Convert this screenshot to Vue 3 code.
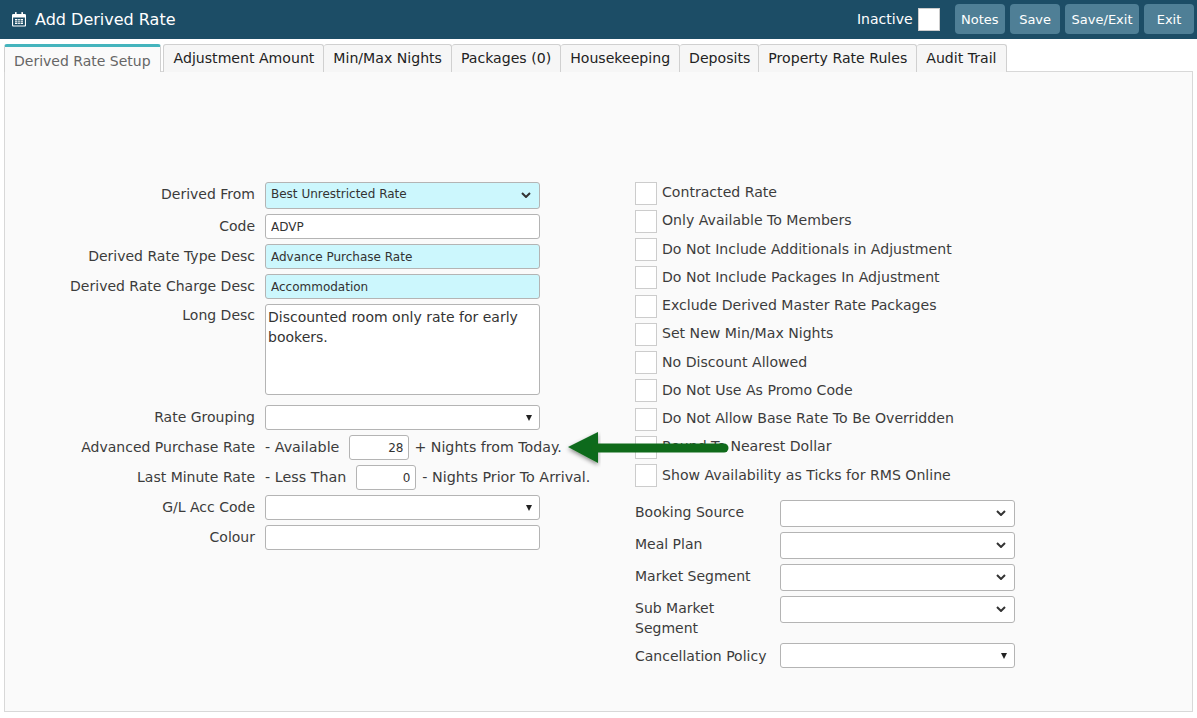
<template>
  <div class="page">
    <header class="topbar">
      <svg class="cal" viewBox="0 0 14 16" width="14" height="16">
        <path d="M1.5 3.5h11a1 1 0 0 1 1 1v9.5a1 1 0 0 1-1 1h-11a1 1 0 0 1-1-1V4.500a1 1 0 0 1 1-1z" fill="none" stroke="#fff" stroke-width="1.200" />
        <path d="M1 3.500h12v3H1z" fill="#fff" />
        <rect x="3" y="1" width="1.600" height="3" rx=".6" fill="#fff" />
        <rect x="9.400" y="1" width="1.600" height="3" rx=".6" fill="#fff" />
        <path d="M3 8h8v5H3z" fill="#fff" />
        <path d="M5.700 8v5M8.300 8v5M3 9.700h8M3 11.300h8" stroke="#1c4d66" stroke-width=".7" />
      </svg>
      <h1>Add Derived Rate</h1>
      <div class="actions">
        <label class="inactive">Inactive <input type="checkbox" class="check" /></label>
        <button v-for="b in buttons" :key="b">{{ b }}</button>
      </div>
    </header>

    <nav class="tabs">
      <div v-for="(t, i) in tabs" :key="t" class="tab" :class="{ active: i === 0 }">{{ t }}</div>
    </nav>

    <main class="panel">
      <section class="left">
        <div class="row tall">
          <label>Derived From</label>
          <div class="select req">
            <span class="sel-text">Best Unrestricted Rate</span>
            <svg class="chev" viewBox="0 0 10 6" width="10" height="6"><path d="M1 1l4 4 4-4" fill="none" stroke="#333" stroke-width="2" /></svg>
          </div>
        </div>
        <div class="row">
          <label>Code</label>
          <input class="field" value="ADVP" />
        </div>
        <div class="row">
          <label>Derived Rate Type Desc</label>
          <input class="field req" value="Advance Purchase Rate" />
        </div>
        <div class="row">
          <label>Derived Rate Charge Desc</label>
          <input class="field req" value="Accommodation" />
        </div>
        <div class="row area">
          <label>Long Desc</label>
          <textarea class="field">Discounted room only rate for early bookers.</textarea>
        </div>
        <div class="row">
          <label>Rate Grouping</label>
          <div class="select"><span></span><i class="tri"></i></div>
        </div>
        <div class="row">
          <label>Advanced Purchase Rate</label>
          <div class="inline">
            <span>- Available</span>
            <input class="field num" value="28" />
            <span class="plus">+ Nights from Today.</span>
          </div>
        </div>
        <div class="row">
          <label>Last Minute Rate</label>
          <div class="inline">
            <span>- Less Than</span>
            <input class="field num" value="0" />
            <span>- Nights Prior To Arrival.</span>
          </div>
        </div>
        <div class="row">
          <label>G/L Acc Code</label>
          <div class="select"><span></span><i class="tri"></i></div>
        </div>
        <div class="row">
          <label>Colour</label>
          <input class="field" />
        </div>
      </section>

      <section class="right">
        <div class="checks">
          <label v-for="c in checks" :key="c" class="check-row">
            <input type="checkbox" class="check" />
            <span>{{ c }}</span>
          </label>
        </div>
        <div class="combos">
          <div v-for="s in combos" :key="s.label" class="combo">
            <label>{{ s.label }}</label>
            <div class="select" :class="{ short: s.tri }">
              <span></span>
              <i v-if="s.tri" class="tri"></i>
              <svg v-else class="chev" viewBox="0 0 10 6" width="10" height="6"><path d="M1 1l4 4 4-4" fill="none" stroke="#333" stroke-width="2" /></svg>
            </div>
          </div>
        </div>
      </section>

      <svg class="arrow" viewBox="0 0 176 40" width="176" height="40">
        <defs>
          <filter id="sh" x="-10%" y="-30%" width="120%" height="170%">
            <feDropShadow dx="0" dy="2" stdDeviation="2" flood-color="#000" flood-opacity=".45" />
          </filter>
        </defs>
        <path d="M164 18H36" stroke="#0f6a1a" stroke-width="9" stroke-linecap="round" fill="none" filter="url(#sh)" />
        <path d="M8 17L38 2v31z" fill="#0f6a1a" filter="url(#sh)" />
        <path d="M164 18H36" stroke="#0f6a1a" stroke-width="9" stroke-linecap="round" fill="none" />
      </svg>
    </main>
  </div>
</template>

<script setup>
const buttons = ["Notes", "Save", "Save/Exit", "Exit"];
const tabs = [
  "Derived Rate Setup",
  "Adjustment Amount",
  "Min/Max Nights",
  "Packages (0)",
  "Housekeeping",
  "Deposits",
  "Property Rate Rules",
  "Audit Trail",
];
const checks = [
  "Contracted Rate",
  "Only Available To Members",
  "Do Not Include Additionals in Adjustment",
  "Do Not Include Packages In Adjustment",
  "Exclude Derived Master Rate Packages",
  "Set New Min/Max Nights",
  "No Discount Allowed",
  "Do Not Use As Promo Code",
  "Do Not Allow Base Rate To Be Overridden",
  "Round To Nearest Dollar",
  "Show Availability as Ticks for RMS Online",
];
const combos = [
  { label: "Booking Source" },
  { label: "Meal Plan" },
  { label: "Market Segment" },
  { label: "Sub Market Segment" },
  { label: "Cancellation Policy", tri: true },
];
</script>

<style>
html,
body {
  margin: 0;
  background: #fff;
}
</style>

<style scoped>
.page {
  width: 1197px;
  height: 718px;
  overflow: hidden;
  font-family: "DejaVu Sans", Verdana, sans-serif;
  font-size: 14px;
  color: #3c3c3c;
}
.topbar {
  height: 39px;
  background: #1c4d66;
  display: flex;
  align-items: center;
  padding: 0 3px 1px 12px;
  box-sizing: border-box;
}
.cal {
  margin-right: 9px;
}
h1 {
  margin: 0;
  font-size: 16px;
  font-weight: normal;
  color: #fff;
}
.actions {
  margin-left: auto;
  display: flex;
  align-items: center;
  gap: 5px;
}
.inactive {
  display: flex;
  align-items: center;
  gap: 5px;
  color: #fff;
  margin-right: 10px;
}
button {
  height: 30px;
  padding: 0 6.500px;
  min-width: 50px;
  border: none;
  border-radius: 4px;
  background: #4f7f96;
  color: #fff;
  font: inherit;
  font-size: 13px;
}
.tabs {
  display: flex;
  height: 28px;
  margin-top: 5px;
  padding-left: 4px;
  align-items: flex-start;
  position: relative;
  z-index: 1;
}
.tab {
  height: 27px;
  line-height: 27px;
  padding: 0 9px;
  border: 1px solid #d0d0d0;
  border-bottom: none;
  border-left: none;
  border-radius: 3px 3px 0 0;
  background: #f6f6f6;
  color: #222;
  font-size: 14.100px;
  white-space: nowrap;
}
.tab.active {
  height: 28px;
  line-height: 29px;
  border-left: 1px solid #d0d0d0;
  border-top: 3px solid #44b4bd;
  box-sizing: border-box;
  background: #fafafa;
  color: #666;
  font-size: 14px;
  margin-right: 2px;
}
.tab.active + .tab {
  border-left: 1px solid #d0d0d0;
  padding-left: 10px;
}
.tab:nth-child(6) {
  padding-right: 8px;
}
.panel {
  position: relative;
  margin: -1px 4px 0;
  height: 641px;
  box-sizing: border-box;
  border: 1px solid #d8d8d8;
  background: #fafafa;
  display: flex;
  padding-top: 110px;
}
.left {
  width: 535px;
  margin-right: 95px;
  flex: none;
  display: flex;
  flex-direction: column;
  gap: 5px;
}
.row {
  display: flex;
  align-items: center;
  min-height: 25px;
}
.row.tall .select {
  height: 27px;
}
.row.area {
  align-items: flex-start;
  margin-bottom: 5px;
}
.row > label {
  width: 250px;
  text-align: right;
  margin-right: 10px;
  padding-bottom: 2px;
  flex: none;
}
.row.tall > label {
  padding-bottom: 4px;
}
.row.area > label {
  padding-top: 3px;
  padding-bottom: 0;
}
.field,
.select {
  width: 275px;
  height: 25px;
  box-sizing: border-box;
  border: 1px solid #b4b4b4;
  border-radius: 3px;
  background: #fff;
  font: inherit;
  font-size: 12px;
  color: #333;
  padding: 0 5px;
  outline: none;
}
.req {
  background: #ccf7fd;
}
.select {
  display: flex;
  align-items: center;
  justify-content: space-between;
  padding-right: 7px;
}
.sel-text {
  padding-bottom: 3px;
}
textarea.field {
  display: block;
  height: 91px;
  padding: 2px;
  font-size: 14px;
  line-height: 20px;
  resize: none;
}
.tri {
  width: 0;
  height: 0;
  border-left: 3px solid transparent;
  border-right: 3px solid transparent;
  border-top: 6px solid #222;
}
.chev {
  display: block;
  margin: 0 1px 2px 0;
}
.inline {
  display: flex;
  align-items: center;
  white-space: nowrap;
  font-size: 14.300px;
}
.inline span {
  padding-bottom: 2px;
}
.inline .plus {
  font-size: 14.200px;
  margin-left: -1px;
}
.num {
  width: 60px;
  margin: 0 6px 0 10px;
  text-align: right;
  padding-right: 5px;
}
.right {
  margin-top: -3px;
}
.checks {
  display: grid;
  grid-auto-rows: 28.250px;
}
.check-row {
  display: flex;
  align-items: center;
  gap: 5px;
  font-size: 14.100px;
}
.check-row span {
  padding-bottom: 2px;
}
.check {
  appearance: none;
  margin: 0;
  width: 22px;
  height: 23px;
  flex: none;
  background: #fff;
  border: 1px solid #ccc;
  box-sizing: border-box;
}
.combos {
  margin-top: 10.500px;
  display: flex;
  flex-direction: column;
  gap: 5px;
}
.combo {
  display: flex;
  align-items: flex-start;
}
.combo label {
  width: 145px;
  box-sizing: border-box;
  padding: 2px 10px 0 0;
  line-height: 20px;
  flex: none;
}
.combo:last-child label {
  padding-top: 3px;
}
.combo .select {
  width: 235px;
  height: 27px;
}
.combo .select.short {
  height: 25px;
}
.arrow {
  position: absolute;
  left: 555px;
  top: 358px;
}
</style>
